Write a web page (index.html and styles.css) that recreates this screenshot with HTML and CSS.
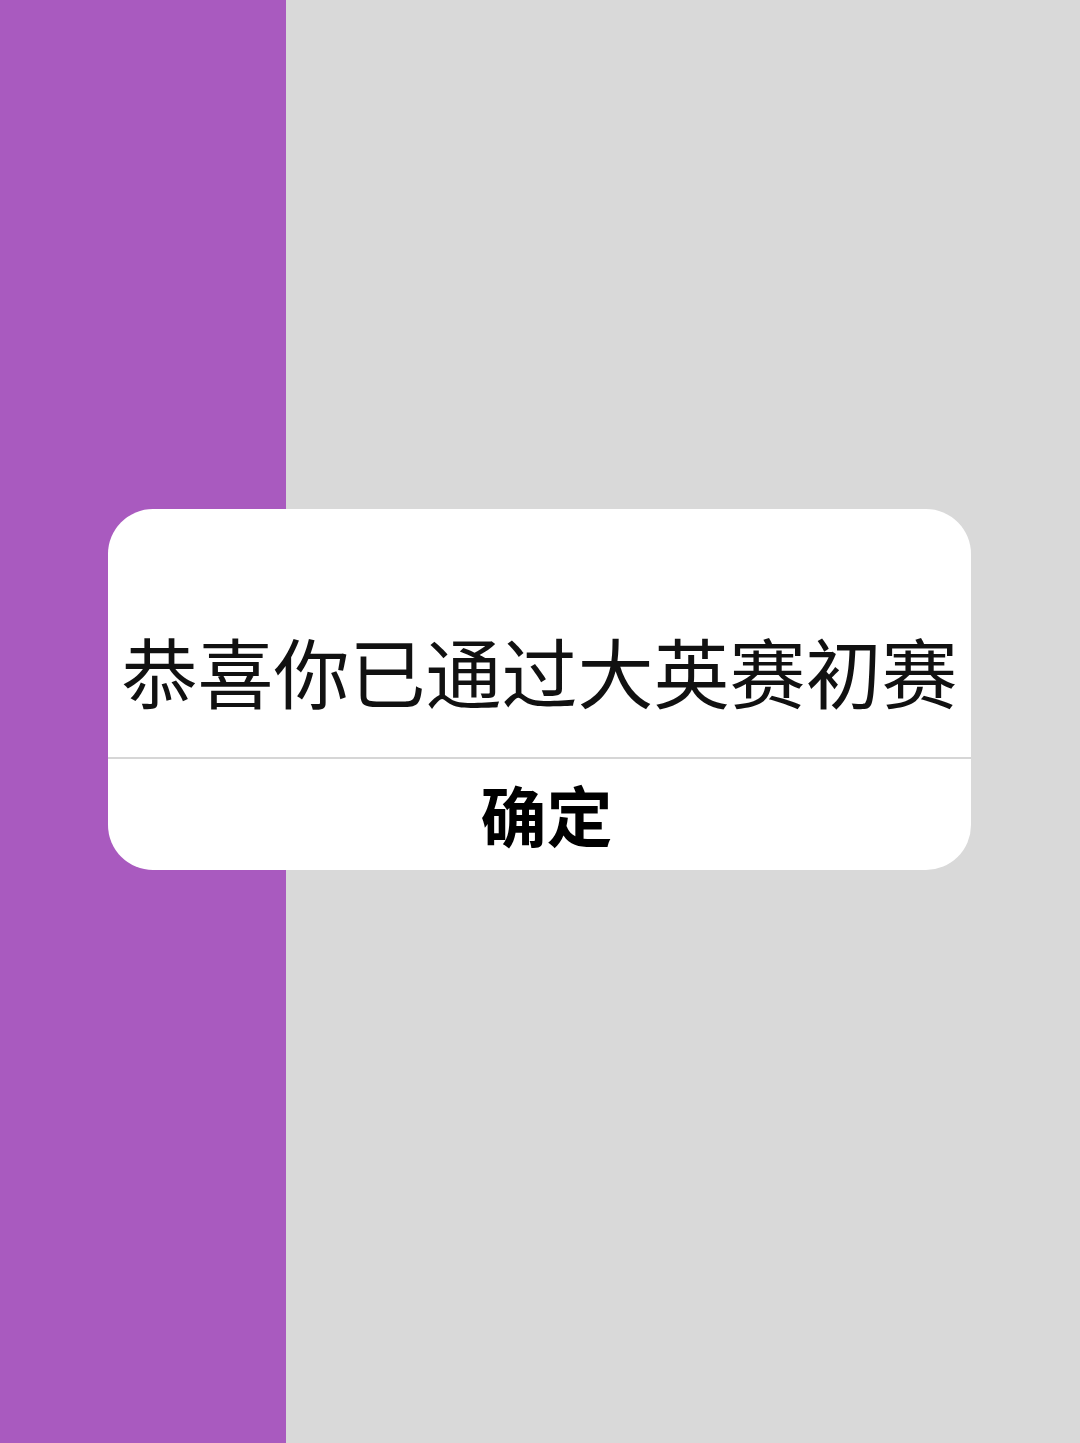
FILE: index.html
```html
<!DOCTYPE html>
<html lang="zh-CN">
<head>
<meta charset="utf-8">
<title>确定</title>
<link rel="stylesheet" href="styles.css">
</head>
<body>
<div class="stage">
  <div class="side"></div>
  <div class="main"></div>
  <div class="dialog">
    <div class="dialog-title">恭喜你已通过大英赛初赛</div>
    <div class="dialog-actions">
      <button class="dialog-btn">确定</button>
    </div>
  </div>
</div>
</body>
</html>
```

FILE: styles.css
```css
html, body {
  margin: 0;
  padding: 0;
}

body {
  font-family: "Noto Sans CJK SC", "Noto Sans", sans-serif;
  background: #d9d9d9;
}

.stage {
  position: relative;
  display: flex;
  width: 1080px;
  height: 1443px;
  overflow: hidden;
}

.side {
  width: 286px;
  background: #a95abf;
}

.main {
  flex: 1;
  background: #d9d9d9;
}

/* modal card over both columns */
.dialog {
  position: absolute;
  left: 108px;
  top: 509px;
  width: 863px;
  height: 361px;
  background: #ffffff;
  border-radius: 45px;
  display: flex;
  flex-direction: column;
  overflow: hidden;
}

.dialog-title {
  height: 250px;
  box-sizing: border-box;
  padding-top: 119px;
  font-size: 76px;
  line-height: 84px;
  text-align: center;
  color: #111111;
  white-space: nowrap;
  border-bottom: 2px solid #d6d6d6;
}

.dialog-actions {
  flex: 1;
  display: flex;
  align-items: center;
  justify-content: center;
  padding-left: 14px;
  padding-bottom: 4px;
}

.dialog-btn {
  border: 0;
  background: none;
  padding: 0;
  font-family: inherit;
  font-size: 66px;
  font-weight: 700;
  line-height: 1;
  color: #000000;
}
```
